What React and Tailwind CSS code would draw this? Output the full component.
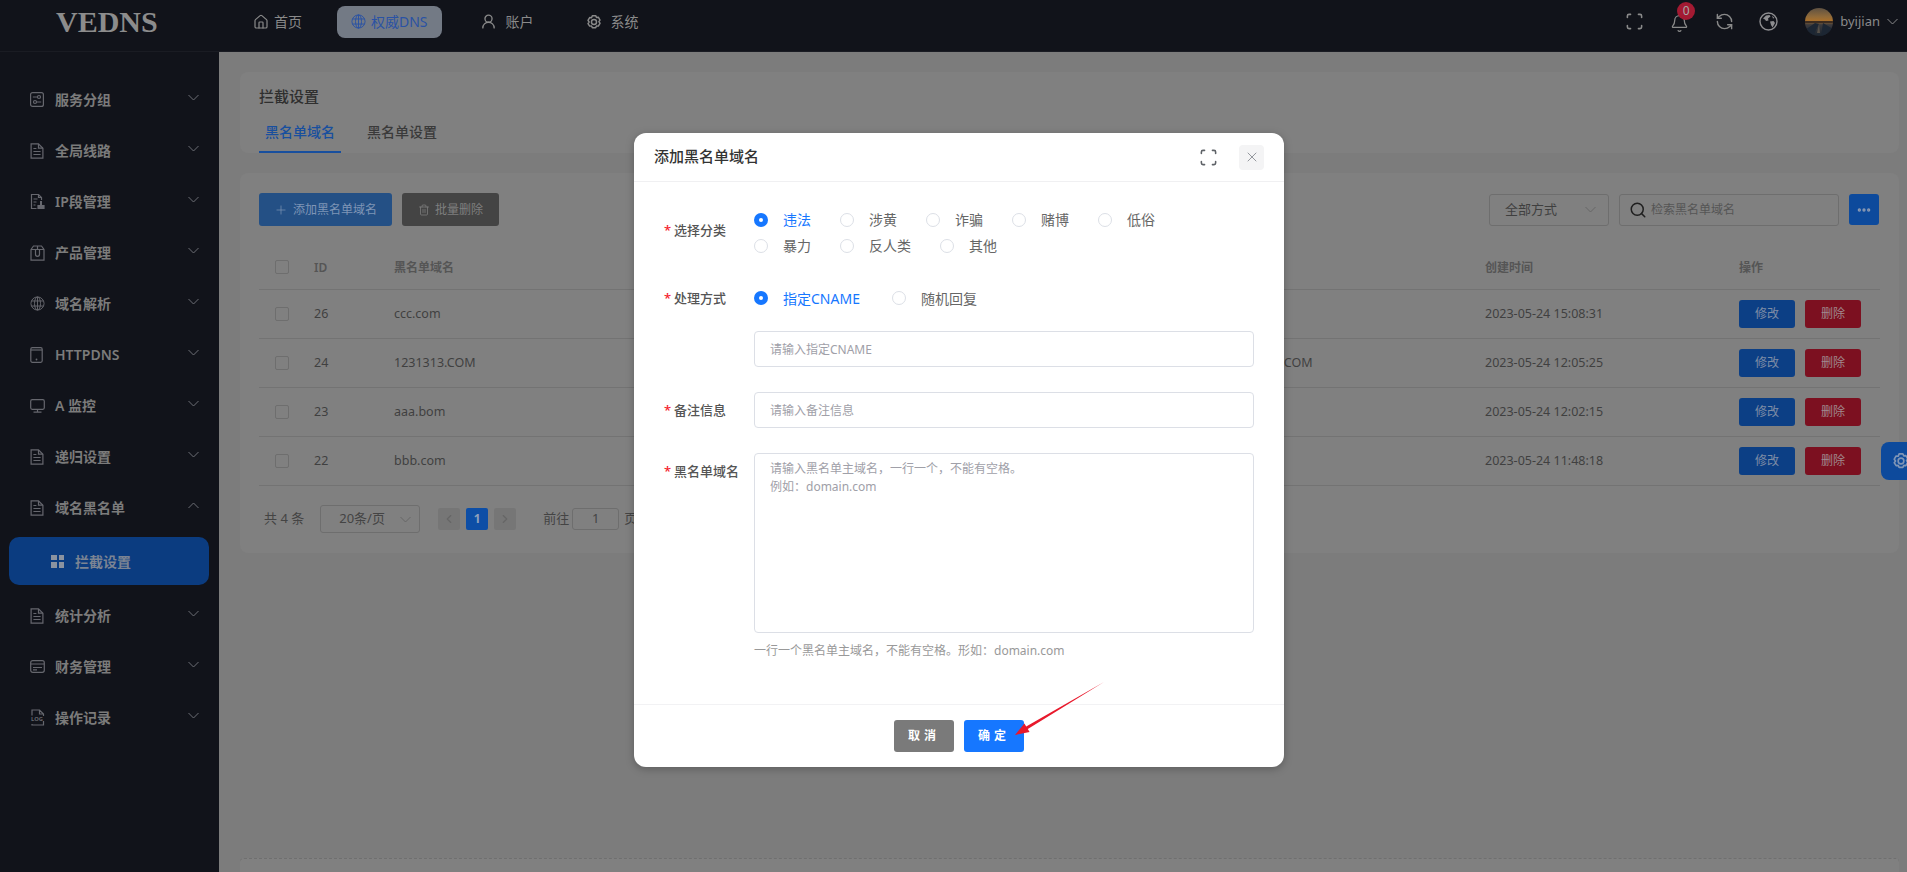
import React from "react";
import { House, UserRound, Scan, Bell, RefreshCcw, Plus, Trash2, Search, X, ChevronLeft, ChevronRight, Ellipsis } from "lucide-react";

const Chev = ({ up, cls = "" }) => (
  <svg width="11" height="7" viewBox="0 0 11 7" fill="none" stroke="currentColor" strokeWidth="1" className={cls}>
    <path d={up ? "M.5 6 5.5 1l5 5" : "M.5 1l5 5 5-5"} />
  </svg>
);
const Gear = ({ size = 16, cls = "" }) => (
  <svg width={size} height={size} viewBox="0 0 24 24" fill="none" stroke="currentColor" strokeWidth="2.2" strokeLinejoin="round" className={cls}>
    <path d="M9.500 2.500h5l1.200 2.600 2.800-.3 2.500 4.300-1.700 2.400 1.700 2.400-2.500 4.300-2.800-.3-1.200 2.600h-5l-1.200-2.600-2.800.3L3 14.400l1.700-2.400L3 9.600l2.500-4.300 2.800.3z" />
    <circle cx="12" cy="12" r="3.800" />
  </svg>
);
const GridGlobe = ({ size = 16, cls = "" }) => (
  <svg width={size} height={size} viewBox="0 0 16 16" fill="none" stroke="currentColor" strokeWidth="1" className={cls}>
    <circle cx="8" cy="8" r="7" /><ellipse cx="8" cy="8" rx="3.200" ry="7" />
    <path d="M8 1v14M1.600 5.300h12.800M1.600 10.700h12.800" />
  </svg>
);
const EarthIcon = () => (
  <svg width="19" height="19" viewBox="0 0 19 19" fill="none">
    <circle cx="9.500" cy="9.500" r="8.500" stroke="#8d8d90" strokeWidth="1.400" />
    <path d="M4 6.500 7 3.500l3.500-.5 1 1.500L9 6.500l.5 2-2.500.5-1-1.500zM11 9.500l3.500-.5 1.500 2-2.500 4.500-1.500-2.500zM13 3.500l2.500 2.500-1.500.5z" fill="#8d8d90" />
  </svg>
);
const Avatar = () => (
  <svg width="28" height="28" viewBox="0 0 28 28" className="ml-[27px] rounded-full">
    <defs>
      <linearGradient id="sky" x1="0" y1="0" x2="0" y2="1">
        <stop offset="0" stopColor="#5e5142" /><stop offset="0.3" stopColor="#8f6a3a" /><stop offset="0.45" stopColor="#a8702c" />
        <stop offset="0.6" stopColor="#3b3a3d" /><stop offset="1" stopColor="#1a2430" />
      </linearGradient>
    </defs>
    <rect width="28" height="28" fill="url(#sky)" />
    <path d="M0 13h28v2H0z" fill="#3c2c20" />
    <path d="M0 22 10 15l4 1L8 28H0zM18 15l10 6v7H16z" fill="#1c2633" />
    <path d="M14 16l-2 9 3 0z" fill="#555049" />
  </svg>
);
const Svc = ({ c }) => (
  <svg width="14" height="15" viewBox="0 0 14 15" fill="none" stroke="currentColor" strokeWidth="1.200" className={c}>
    <rect x=".6" y=".6" width="12.800" height="13.800" rx="2" />
    <path d="M2.800 5h4.600M6.600 10h4.600" /><circle cx="9" cy="5" r="1.500" /><circle cx="5" cy="10" r="1.500" />
  </svg>
);
const Doc = ({ c }) => (
  <svg width="14" height="16" viewBox="0 0 14 16" fill="none" stroke="currentColor" strokeWidth="1.200" className={c}>
    <path d="M1.100.9h7.400l4.400 4.300v9.900H1.100z" /><path d="M8.500.9v4.300h4.400M3.400 5.500h3M3.400 8.500h7.200M3.400 11.500h7.200" />
  </svg>
);
const Stamp = ({ c }) => (
  <svg width="16" height="17" viewBox="0 0 16 17" fill="none" stroke="currentColor" strokeWidth="1.200" className={c}>
    <path d="M6.500 15.500h-5v-14h7l3 3V7" /><path d="M8.500 1.500v3h3M3.500 6h4M3.500 9h3M3.500 12h2" />
    <path d="M11 8v4" strokeWidth="2" /><path d="M8 12.500h6v3H8z" fill="currentColor" />
  </svg>
);
const Box = ({ c }) => (
  <svg width="15" height="16" viewBox="0 0 15 16" fill="none" stroke="currentColor" strokeWidth="1.200" className={c}>
    <path d="M1 4.500 3.500 1h8L14 4.500v10.700H1z" /><path d="M1 4.500h13M5.500 4.500v4.800a2 2 0 0 0 4 0V4.500M7.500 1v3.500" />
  </svg>
);
const Dom = ({ c }) => <GridGlobe size={15} cls={c} />;
const Phone = ({ c }) => (
  <svg width="13" height="16" viewBox="0 0 13 16" fill="none" stroke="currentColor" strokeWidth="1.200" className={c}>
    <rect x=".8" y=".7" width="11.400" height="14.600" rx="1.500" /><path d="M.8 3h11.400" />
    <circle cx="6.500" cy="12.500" r=".9" fill="currentColor" stroke="none" />
  </svg>
);
const Mon = ({ c }) => (
  <svg width="15" height="14" viewBox="0 0 15 14" fill="none" stroke="currentColor" strokeWidth="1.200" className={c}>
    <rect x=".7" y=".7" width="13.600" height="9.600" rx="1.500" /><path d="M7.500 10.300v2.700M3.500 13.200h8" />
  </svg>
);
const Card = ({ c }) => (
  <svg width="15" height="13" viewBox="0 0 15 13" fill="none" stroke="currentColor" strokeWidth="1.200" className={c}>
    <rect x=".7" y=".7" width="13.600" height="11.600" rx="2" /><path d="M.7 4h13.600M3 7.500h9M3 9.800h4" />
  </svg>
);
const Log = ({ c }) => (
  <svg width="15" height="17" viewBox="0 0 15 17" fill="none" stroke="currentColor" strokeWidth="1.200" className={c}>
    <path d="M2 6.500V1h7.500L13.500 5v2M13.500 12v4H2v-1M9.500 1v4h4" />
    <text x="7" y="11.700" fontSize="5.800" fontWeight="700" fill="currentColor" stroke="none" textAnchor="middle">LOG</text>
  </svg>
);

const menuTop = [
  ["服务分组", Svc], ["全局线路", Doc], ["IP段管理", Stamp], ["产品管理", Box], ["域名解析", Dom],
  ["HTTPDNS", Phone], ["A 监控", Mon], ["递归设置", Doc],
];
const menuBottom = [["统计分析", Doc], ["财务管理", Card], ["操作记录", Log]];

const MenuItem = ({ label, Icon, up }) => (
  <div className="h-[51px] flex items-center pl-[30px] pr-[20px] text-[#7b7b7b]">
    <span className="w-[25px] flex items-center"><Icon c="text-[#66676e]" /></span>
    <span className="flex-1 text-[14px] font-semibold">{label}</span>
    <Chev up={up} cls="text-[#6d6e74] -mt-[4px]" />
  </div>
);

const rows = [
  ["26", "ccc.com", "", "2023-05-24 15:08:31"],
  ["24", "1231313.COM", "1231313.COM", "2023-05-24 12:05:25"],
  ["23", "aaa.bom", "", "2023-05-24 12:02:15"],
  ["22", "bbb.com", "", "2023-05-24 11:48:18"],
];
const gridCols = "grid grid-cols-[55px_80px_837px_254px_254px_1fr] items-center";

const Check = () => <span className="block w-[14px] h-[14px] ml-[16px] rounded-[2px] border border-[#6e6e6e]" />;

const Radio = ({ label, on, cls = "mr-[29px]" }) => (
  <span className={`inline-flex items-center ${cls}`}>
    {on ? (
      <span className="w-[14px] h-[14px] rounded-full bg-[#1677ff] flex items-center justify-center"><span className="w-[4px] h-[4px] rounded-full bg-white" /></span>
    ) : (
      <span className="w-[14px] h-[14px] rounded-full border border-[#dcdfe6] bg-white" />
    )}
    <span className={`ml-[15px] text-[14px] ${on ? "text-[#1677ff]" : "text-[#666]"}`}>{label}</span>
  </span>
);

const Label = ({ children, cls = "" }) => (
  <div className={`w-[90px] shrink-0 text-[13px] font-medium text-[#555] flex ${cls}`}>
    <span className="w-[10px] text-[#f5222d]">*</span>{children}
  </div>
);

export default function App() {
  return (
    <div className="relative w-full h-[872px] overflow-hidden flex flex-col bg-[#7c7c7c] font-['Noto_Sans','Noto_Sans_CJK_SC',sans-serif]">
      {/* top bar */}
      <header className="h-[52px] shrink-0 flex items-center pb-[8px] bg-[#11131a] border-b border-[#1a1c23]">
        <div className="w-[239px] pl-[56px] font-['Liberation_Serif',serif] font-bold text-[30px] leading-none text-[#8c8c8c]">VEDNS</div>
        <nav className="flex items-center text-[14px] text-[#8a8a8a]">
          <a className="flex items-center gap-[5px] h-[32px] px-[14px]"><House size={16} strokeWidth={1.8} />首页</a>
          <a className="flex items-center gap-[5px] h-[32px] px-[14px] ml-[21px] rounded-[8px] bg-[#737a85] text-[#2a52a4]"><GridGlobe size={15} />权威DNS</a>
          <a className="flex items-center gap-[9px] h-[32px] px-[14px] ml-[24px]"><UserRound size={17} strokeWidth={1.9} />账户</a>
          <a className="flex items-center gap-[9px] h-[32px] px-[14px] ml-[24px]"><Gear size={16} />系统</a>
        </nav>
        <div className="ml-auto flex items-center pr-[9px] text-[#8a8a8a]">
          <Scan size={19} strokeWidth={2} />
          <span className="relative ml-[26px] h-[22px] block">
            <Bell size={19} strokeWidth={1.6} className="mt-[3px]" />
            <span className="absolute left-[7px] -top-[9px] w-[18px] h-[18px] rounded-full bg-[#a31a32] text-[#a8a8a8] text-[12px] leading-[18px] text-center">0</span>
          </span>
          <RefreshCcw size={19} strokeWidth={1.8} className="ml-[26px]" />
          <span className="ml-[25px] flex"><EarthIcon /></span>
          <Avatar />
          <span className="ml-[7px] text-[13px]">byijian</span>
          <Chev cls="ml-[7px] text-[#8a8a8a]" />
        </div>
      </header>

      <div className="flex-1 flex min-h-0">
        {/* sidebar */}
        <aside className="w-[219px] shrink-0 bg-[#11131a] pt-[22px]">
          {menuTop.map(([l, I]) => <MenuItem key={l} label={l} Icon={I} />)}
          <MenuItem label="域名黑名单" Icon={Doc} up />
          <div className="mt-[4px] mb-[5px] ml-[9px] mr-[10px] h-[48px] rounded-[10px] bg-[#0b3c80] flex items-center pl-[42px] text-[#7b8493]">
            <span className="grid grid-cols-2 gap-[2px] mr-[11px]">
              <i className="w-[5.500px] h-[5.500px] bg-[#8b93a0]" /><i className="w-[5.500px] h-[5.500px] bg-[#8b93a0]" />
              <i className="w-[5.500px] h-[5.500px] bg-[#8b93a0]" /><i className="w-[5.500px] h-[5.500px] bg-[#8b93a0]" />
            </span>
            <span className="text-[14px] font-semibold">拦截设置</span>
          </div>
          {menuBottom.map(([l, I]) => <MenuItem key={l} label={l} Icon={I} />)}
        </aside>

        {/* main */}
        <main className="flex-1 pl-[21px] pr-[8px] pt-[20px]">
          <section className="h-[81px] rounded-[8px] bg-[#808080] px-[19px] pt-[13px]">
            <h2 className="text-[15px] leading-[22px] font-medium text-[#2f2f2f]">拦截设置</h2>
            <div className="flex mt-[15px] text-[14px] font-medium leading-[20px]">
              <span className="w-[82px] h-[31px] text-center text-[#184f9e] border-b-2 border-[#184f9e]">黑名单域名</span>
              <span className="ml-[26px] text-[#3a3a3a]">黑名单设置</span>
            </div>
          </section>

          <section className="mt-[20px] h-[380px] rounded-[8px] bg-[#808080] px-[19px] pt-[20px]">
            <div className="flex items-center h-[33px] pr-[1px]">
              <button className="h-[33px] w-[133px] rounded-[3px] bg-[#245085] text-[#7f95b6] text-[12px] flex items-center justify-center gap-[5px]"><Plus size={14} strokeWidth={1.2} />添加黑名单域名</button>
              <button className="ml-[10px] h-[33px] w-[97px] rounded-[3px] bg-[#444] text-[#7f7f7f] text-[12px] flex items-center justify-center gap-[5px]"><Trash2 size={12} strokeWidth={1.5} />批量删除</button>
              <div className="ml-auto w-[120px] h-[32px] rounded-[3px] border border-[#6e6e6e] flex items-center justify-between pl-[15px] pr-[12px] text-[13px] text-[#3f3f3f]">全部方式<Chev cls="text-[#666]" /></div>
              <div className="ml-[10px] w-[220px] h-[32px] rounded-[3px] border border-[#6e6e6e] flex items-center pl-[9px] text-[12px] text-[#555]"><Search size={18} strokeWidth={2} className="text-[#1f1f1f] mr-[4px]" />检索黑名单域名</div>
              <button className="ml-[10px] w-[30px] h-[31px] rounded-[3px] bg-[#0d4a9c] text-[#8b9ab3] flex items-center justify-center"><Ellipsis size={16} strokeWidth={3} /></button>
            </div>

            <div className={`${gridCols} mt-[19px] h-[45px] border-b border-[#737373] text-[12px] font-semibold text-[#555]`}>
              <Check /><span className="pt-[1px]">ID</span><span className="pt-[1px]">黑名单域名</span><span /><span className="pt-[1px]">创建时间</span><span className="pt-[1px]">操作</span>
            </div>
            {rows.map((r) => (
              <div key={r[0]} className={`${gridCols} h-[49px] border-b border-[#737373] text-[12.500px] text-[#404040]`}>
                <Check /><span className="pt-[1px]">{r[0]}</span><span className="pt-[1px]">{r[1]}</span><span className="pt-[1px]">{r[2]}</span><span className="pt-[1px]">{r[3]}</span>
                <span className="flex gap-[10px]">
                  <button className="w-[56px] h-[28px] rounded-[3px] bg-[#0c3f85] text-[#7f8da6] text-[12px]">修改</button>
                  <button className="w-[56px] h-[28px] rounded-[3px] bg-[#7c1020] text-[#a08a8e] text-[12px]">删除</button>
                </span>
              </div>
            ))}

            <div className="flex items-center mt-[19px] h-[28px] text-[13px] text-[#444]">
              <span className="ml-[5px]">共 4 条</span>
              <div className="ml-[16px] w-[100px] h-[28px] rounded-[3px] border border-[#6e6e6e] flex items-center justify-between pl-[18px] pr-[8px]">20条/页<Chev cls="text-[#666]" /></div>
              <span className="ml-[18px] w-[22px] h-[22px] rounded-[2px] bg-[#767676] text-[#666] flex items-center justify-center"><ChevronLeft size={14} /></span>
              <span className="ml-[6px] w-[22px] h-[22px] rounded-[2px] bg-[#0d4ea6] text-[#8fa0bb] font-bold text-[12px] flex items-center justify-center">1</span>
              <span className="ml-[6px] w-[22px] h-[22px] rounded-[2px] bg-[#767676] text-[#666] flex items-center justify-center"><ChevronRight size={14} /></span>
              <span className="ml-[27px]">前往</span>
              <span className="ml-[3px] w-[47px] h-[22px] rounded-[3px] border border-[#6e6e6e] flex items-center justify-center">1</span>
              <span className="ml-[5px]">页</span>
            </div>
          </section>

          <section className="mt-[305px] h-[40px] rounded-t-[4px] border-t border-dashed border-[#6f6f6f] bg-[#808080]" />
        </main>
      </div>

      {/* floating settings tab */}
      <div className="absolute right-0 top-[442px] w-[26px] h-[38px] rounded-l-[8px] bg-[#0d4a9c] flex items-center pl-[11px] overflow-hidden text-[#7f95b6]"><Gear size={18} cls="shrink-0" /></div>

      {/* modal */}
      <div className="absolute left-[634px] top-[133px] w-[650px] h-[634px] rounded-[12px] bg-white shadow-[0_2px_8px_rgba(0,0,0,0.25)] flex flex-col">
        <div className="h-[49px] shrink-0 border-b border-[#f0f0f2] flex items-center pl-[20px] pr-[20px]">
          <h3 className="text-[15px] font-medium text-[#333] -mt-[2px]">添加黑名单域名</h3>
          <Scan size={19} strokeWidth={2} className="ml-auto text-[#5f6368]" />
          <span className="ml-[21px] w-[25px] h-[25px] rounded-[4px] bg-[#f4f4f5] flex items-center justify-center text-[#7b7f86]"><X size={16} strokeWidth={1.2} /></span>
        </div>
        <div className="flex-1 pl-[30px] pr-[30px] pt-[25px]">
          <div className="flex">
            <Label cls="mt-[10px] leading-[26px]">选择分类</Label>
            <div className="leading-[26px]">
              <div className="flex h-[26px]"><Radio on label="违法" /><Radio label="涉黄" /><Radio label="诈骗" /><Radio label="赌博" /><Radio label="低俗" /></div>
              <div className="flex h-[26px]"><Radio label="暴力" /><Radio label="反人类" /><Radio label="其他" /></div>
            </div>
          </div>
          <div className="flex mt-[26px]">
            <Label cls="leading-[26px]">处理方式</Label>
            <div className="flex h-[26px]"><Radio on label="指定CNAME" cls="mr-[32px]" /><Radio label="随机回复" /></div>
          </div>
          <div className="ml-[90px] mt-[20px] h-[36px] rounded-[4px] border border-[#dcdfe6] flex items-center pl-[15px] pt-[1px] text-[12px] text-[#a0a0a8]">请输入指定CNAME</div>
          <div className="flex mt-[25px]">
            <Label cls="leading-[36px]">备注信息</Label>
            <div className="flex-1 h-[36px] rounded-[4px] border border-[#dcdfe6] flex items-center pl-[15px] pt-[1px] text-[12px] text-[#a0a0a8]">请输入备注信息</div>
          </div>
          <div className="flex mt-[25px]">
            <Label cls="leading-[36px]">黑名单域名</Label>
            <div className="flex-1 h-[180px] rounded-[4px] border border-[#dcdfe6] pl-[15px] pt-[6px] text-[12px] leading-[18px] text-[#a0a0a8]">
              请输入黑名单主域名，一行一个，不能有空格。<br />例如：domain.com
            </div>
          </div>
          <p className="ml-[90px] mt-[9px] text-[12px] leading-[18px] text-[#999]">一行一个黑名单主域名，不能有空格。形如：domain.com</p>
        </div>
        <div className="h-[63px] shrink-0 border-t border-[#f2f2f4] flex justify-center gap-[10px] pt-[15px]">
          <button className="w-[60px] h-[32px] rounded-[3px] bg-[#7a7a7a] text-white text-[12px] font-bold tracking-[4px]">取消</button>
          <button className="w-[60px] h-[32px] rounded-[3px] bg-[#1677ff] text-white text-[12px] font-bold tracking-[4px]">确定</button>
        </div>
      </div>

      {/* annotation arrow */}
      <svg className="absolute left-[1010px] top-[678px]" width="100" height="62" viewBox="0 0 100 62">
        <polygon points="5,57 19.600,54.100 17.800,51.100 94,4 16.200,48.500 14.400,45.500" fill="#e8192c" />
      </svg>
    </div>
  );
}
